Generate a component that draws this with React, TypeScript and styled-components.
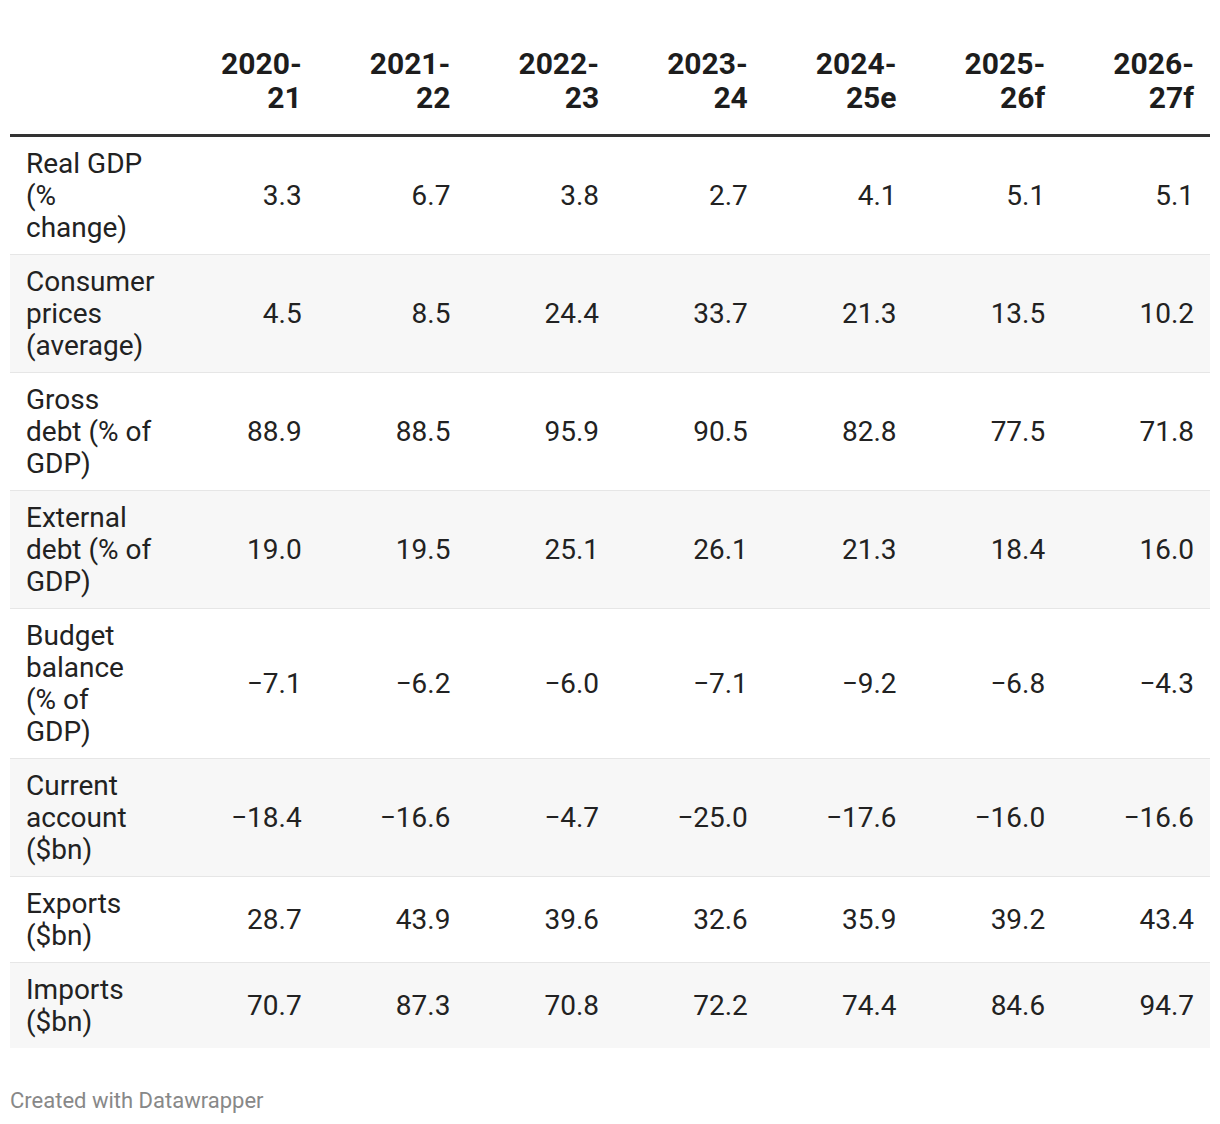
import React from "react";
import styled, { createGlobalStyle } from "styled-components";

const GlobalStyle = createGlobalStyle`
  body {
    margin: 0;
    background: #fff;
    font-family: Roboto, "Liberation Sans", sans-serif;
    color: #222;
  }
`;

interface IRow {
  label: string[];
  values: string[];
}

const years = [
  ["2020-", "21"],
  ["2021-", "22"],
  ["2022-", "23"],
  ["2023-", "24"],
  ["2024-", "25e"],
  ["2025-", "26f"],
  ["2026-", "27f"],
];

const rows: IRow[] = [
  { label: ["Real GDP", "(%", "change)"], values: ["3.3", "6.7", "3.8", "2.7", "4.1", "5.1", "5.1"] },
  { label: ["Consumer", "prices", "(average)"], values: ["4.5", "8.5", "24.4", "33.7", "21.3", "13.5", "10.2"] },
  { label: ["Gross", "debt (% of", "GDP)"], values: ["88.9", "88.5", "95.9", "90.5", "82.8", "77.5", "71.8"] },
  { label: ["External", "debt (% of", "GDP)"], values: ["19.0", "19.5", "25.1", "26.1", "21.3", "18.4", "16.0"] },
  { label: ["Budget", "balance", "(% of", "GDP)"], values: ["−7.1", "−6.2", "−6.0", "−7.1", "−9.2", "−6.8", "−4.3"] },
  { label: ["Current", "account", "($bn)"], values: ["−18.4", "−16.6", "−4.7", "−25.0", "−17.6", "−16.0", "−16.6"] },
  { label: ["Exports", "($bn)"], values: ["28.7", "43.9", "39.6", "32.6", "35.9", "39.2", "43.4"] },
  { label: ["Imports", "($bn)"], values: ["70.7", "87.3", "70.8", "72.2", "74.4", "84.6", "94.7"] },
];

const withBreaks = (lines: string[]) =>
  lines.map((l, i) => (
    <React.Fragment key={i}>
      {i > 0 && <br />}
      {l}
    </React.Fragment>
  ));

export default function App() {
  return (
    <Wrapper>
      <GlobalStyle />
      <Table>
        <colgroup>
          <col style={{ width: 159 }} />
          {years.map((_, i) => (
            <col key={i} />
          ))}
        </colgroup>
        <thead>
          <tr>
            <HeadCell />
            {years.map((y) => (
              <HeadCell key={y[0]} $right>
                {withBreaks(y)}
              </HeadCell>
            ))}
          </tr>
        </thead>
        <tbody>
          {rows.map((row, i) => (
            <Row key={i} $striped={i % 2 === 1}>
              <LabelCell>{withBreaks(row.label)}</LabelCell>
              {row.values.map((v, j) => (
                <ValueCell key={j}>{v}</ValueCell>
              ))}
            </Row>
          ))}
        </tbody>
      </Table>
      <Footer>Created with Datawrapper</Footer>
    </Wrapper>
  );
}

const Wrapper = styled.div`
  padding: 10px 10px 20px;
`;

const Table = styled.table`
  width: 1200px;
  table-layout: fixed;
  border-collapse: collapse;
  font-size: 28px;
`;

const HeadCell = styled.th<{ $right?: boolean }>`
  padding: 37px 16px 19px;
  font-size: 30px;
  line-height: 34px;
  font-weight: 700;
  color: #1d1d1d;
  text-align: ${(p) => (p.$right ? "right" : "left")};
  vertical-align: bottom;
  border-bottom: 3px solid #333;
`;

const Row = styled.tr<{ $striped: boolean }>`
  background: ${(p) => (p.$striped ? "#f7f7f7" : "#fff")};
  border-bottom: 1px solid #e6e6e6;

  &:last-child {
    border-bottom: none;
  }
`;

const LabelCell = styled.td`
  padding: 11px 16px 10px;
  line-height: 32px;
  color: #222;
  text-align: left;
  vertical-align: middle;
  white-space: nowrap;
`;

const ValueCell = styled.td`
  padding: 11px 16px 10px;
  line-height: 32px;
  color: #222;
  text-align: right;
  vertical-align: middle;
  font-variant-numeric: tabular-nums;
`;

const Footer = styled.div`
  margin-top: 41px;
  font-size: 22px;
  line-height: 24px;
  color: #888;
`;
